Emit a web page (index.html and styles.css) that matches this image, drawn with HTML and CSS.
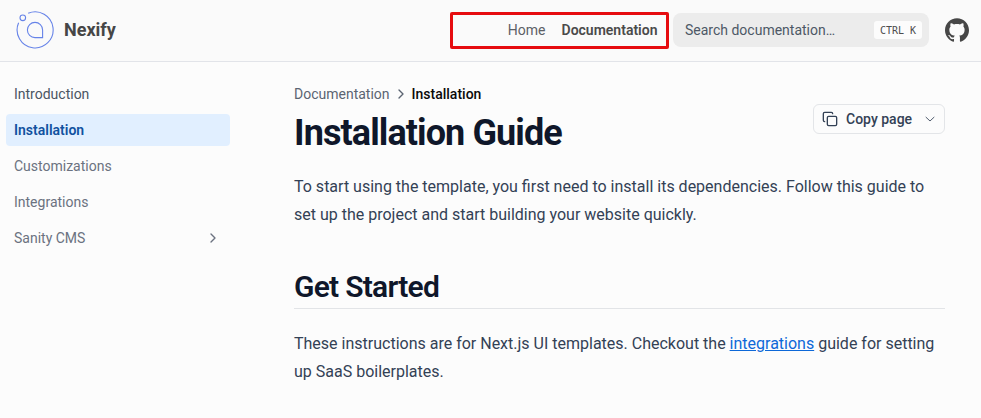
FILE: index.html
```html
<!DOCTYPE html>
<html lang="en">
	<head>
		<meta charset="UTF-8">
		<title>Installation Guide - Nexify</title>
		<link rel="stylesheet" href="styles.css">
	</head>
	<body>
		<header class="header">
			<a class="logo" href="#">
				<svg width="40" height="40" viewBox="0 0 40 40" fill="none" stroke="#6683e8" stroke-width="1.1">
					<path d="M13.2 3.3A18 18 0 1 1 3.6 12.8"/>
					<circle cx="7.8" cy="7.8" r="2.8"/>
					<path d="M27.6 27.6H20A7.6 7.6 0 1 1 27.6 20Z"/>
				</svg>
				<span>Nexify</span>
			</a>
			<nav class="top_nav">
				<a href="#">Home</a>
				<a class="active" href="#">Documentation</a>
			</nav>
			<button class="search">
				<span>Search documentation…</span>
				<kbd>CTRL K</kbd>
			</button>
			<a class="github" href="#">
				<svg width="24" height="24" viewBox="0 0 24 24" fill="#464646">
					<path d="M12 .297c-6.63 0-12 5.373-12 12 0 5.303 3.438 9.8 8.205 11.385.6.113.82-.258.82-.577 0-.285-.01-1.04-.015-2.04-3.338.724-4.042-1.61-4.042-1.61C4.422 18.07 3.633 17.7 3.633 17.7c-1.087-.744.084-.729.084-.729 1.205.084 1.838 1.236 1.838 1.236 1.07 1.835 2.809 1.305 3.495.998.108-.776.417-1.305.76-1.605-2.665-.3-5.466-1.332-5.466-5.93 0-1.31.465-2.38 1.235-3.22-.135-.303-.54-1.523.105-3.176 0 0 1.005-.322 3.3 1.23.96-.267 1.98-.399 3-.405 1.02.006 2.04.138 3 .405 2.28-1.552 3.285-1.23 3.285-1.23.645 1.653.24 2.873.12 3.176.765.84 1.23 1.91 1.23 3.22 0 4.61-2.805 5.625-5.475 5.92.42.36.81 1.096.81 2.22 0 1.606-.015 2.896-.015 3.286 0 .315.21.69.825.57C20.565 22.092 24 17.592 24 12.297c0-6.627-5.373-12-12-12"/>
				</svg>
			</a>
		</header>
		<div class="layout">
			<aside class="sidebar">
				<a class="dark" href="#">Introduction</a>
				<a class="current" href="#">Installation</a>
				<a href="#">Customizations</a>
				<a href="#">Integrations</a>
				<a href="#">Sanity CMS
					<svg width="16" height="16" viewBox="0 0 24 24" fill="none" stroke="currentColor" stroke-width="2" stroke-linecap="round" stroke-linejoin="round"><path d="m9 18 6-6-6-6"/></svg>
				</a>
			</aside>
			<main class="content">
				<div class="page_head">
					<div>
						<div class="breadcrumb">
							<span>Documentation</span>
							<svg width="16" height="16" viewBox="0 0 24 24" fill="none" stroke="currentColor" stroke-width="2" stroke-linecap="round" stroke-linejoin="round"><path d="m9 18 6-6-6-6"/></svg>
							<b>Installation</b>
						</div>
						<h1>Installation Guide</h1>
					</div>
					<button class="copy">
						<svg width="16" height="16" viewBox="0 0 24 24" fill="none" stroke="currentColor" stroke-width="2" stroke-linecap="round" stroke-linejoin="round"><rect x="8" y="8" width="14" height="14" rx="2"/><path d="M4 16c-1.100 0-2-.9-2-2V4c0-1.100.9-2 2-2h10c1.100 0 2 .9 2 2"/></svg>
						<span>Copy page</span>
						<svg width="12" height="12" viewBox="0 0 24 24" fill="none" stroke="currentColor" stroke-width="1.7" stroke-linecap="round" stroke-linejoin="round"><path d="m4 8.500 8 7.500 8-7.500"/></svg>
					</button>
				</div>
				<p>To start using the template, you first need to install its dependencies. Follow this guide to set up the project and start building your website quickly.</p>
				<h2>Get Started</h2>
				<p>These instructions are for Next.js UI templates. Checkout the <a href="#">integrations</a> guide for setting up SaaS boilerplates.</p>
			</main>
		</div>
	</body>
</html>
```

FILE: styles.css
```css
*{
	padding: 0;
	margin: 0;
	box-sizing: border-box;
}
body{
	background: #fcfcfc;
	color: #334155;
	font-family: Roboto, "Liberation Sans", sans-serif;
	font-size: 14px;
	line-height: 20px;
	overflow: hidden;
}
a{
	color: inherit;
	text-decoration: none;
}
button{
	font: inherit;
	color: inherit;
	border: none;
	background: none;
}
svg{
	display: block;
	flex-shrink: 0;
}
.header{
	display: flex;
	align-items: center;
	height: 62px;
	padding: 0 12px 1px 15px;
	background: #fafafa;
	border-bottom: 1px solid #e2e4e9;
}
.logo{
	display: flex;
	align-items: center;
	gap: 9px;
	color: #464646;
	font-size: 18px;
	font-weight: 700;
}
.top_nav{
	display: flex;
	align-items: center;
	justify-content: flex-end;
	gap: 16px;
	width: 219px;
	height: 37px;
	margin-left: auto;
	padding-right: 8.5px;
	border: 3px solid #e60c0f;
	border-radius: 2px;
	color: #5c6066;
}
.top_nav .active{
	color: #4a4a4a;
	font-weight: 600;
}
.search{
	display: flex;
	align-items: center;
	justify-content: space-between;
	width: 256px;
	height: 34px;
	margin: 0 16px 0 4px;
	padding: 0 7px 0 12px;
	border-radius: 8px;
	background: #ececec;
	color: #4d5866;
}
.search kbd{
	width: 48px;
	height: 18px;
	border-radius: 3px;
	background: #fcfcfc;
	color: #4d4d4d;
	font-family: "DejaVu Sans Mono", monospace;
	font-size: 10px;
	line-height: 19px;
	text-align: center;
}
.layout{
	display: flex;
}
.sidebar{
	display: flex;
	flex-direction: column;
	gap: 4px;
	width: 230px;
	padding: 16px 0 0 6px;
	color: #6b7280;
}
.sidebar a{
	display: flex;
	align-items: center;
	justify-content: space-between;
	height: 32px;
	padding: 0 9px 0 8px;
	border-radius: 4px;
}
.sidebar .dark{
	color: #4b5563;
}
.sidebar .current{
	background: #e1efff;
	color: #11529f;
	font-weight: 600;
}
.content{
	width: 651px;
	margin-left: 64px;
	padding-top: 22px;
}
.page_head{
	display: flex;
	justify-content: space-between;
	align-items: center;
}
.breadcrumb{
	display: flex;
	align-items: center;
	gap: 3px;
	color: #5b6472;
}
.breadcrumb b{
	color: #0a0a0a;
	font-weight: 500;
}
h1{
	margin-top: 9px;
	color: #0f172a;
	font-size: 36px;
	font-weight: 700;
	line-height: 40px;
	letter-spacing: -0.9px;
}
.copy{
	display: flex;
	align-items: center;
	width: 132px;
	height: 30px;
	margin-top: 1px;
	padding: 0 8px;
	border: 1px solid #e3e5e8;
	border-radius: 6px;
	font-weight: 500;
}
.copy span{
	margin: 0 auto 0 8px;
}
p{
	margin-top: 20px;
	font-size: 16px;
	line-height: 28px;
}
p a{
	color: #0d68d8;
	text-decoration: underline;
}
h2{
	margin-top: 40px;
	padding-bottom: 3px;
	border-bottom: 1px solid #e2e4e7;
	color: #0f172a;
	font-size: 30px;
	font-weight: 600;
	line-height: 36px;
	letter-spacing: -0.75px;
}
h2 + p{
	margin-top: 21px;
}
```
